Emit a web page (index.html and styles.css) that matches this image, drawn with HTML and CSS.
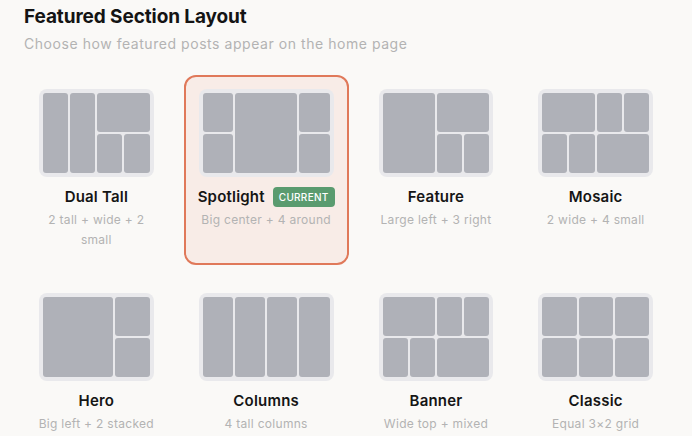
FILE: index.html
```html
<!DOCTYPE html>
<html>
<head>
<meta charset="utf-8">
<link rel="stylesheet" href="styles.css">
</head>
<body>
<div class="page">
  <header class="header">
    <h1 class="title">Featured Section Layout</h1>
    <p class="subtitle">Choose how featured posts appear on the home page</p>
  </header>
  <div class="grid">
    <div class="card">
      <div class="thumb t-dual">
        <i class="c c1"></i><i class="c c2"></i><i class="c c3"></i><i class="c"></i><i class="c"></i>
      </div>
      <div class="name">Dual Tall</div>
      <div class="desc">2 tall + wide + 2 small</div>
    </div>
    <div class="card selected">
      <div class="thumb t-spot">
        <i class="c"></i><i class="c c-mid"></i><i class="c"></i><i class="c"></i><i class="c"></i>
      </div>
      <div class="name">Spotlight <span class="badge">CURRENT</span></div>
      <div class="desc">Big center + 4 around</div>
    </div>
    <div class="card">
      <div class="thumb t-feat">
        <i class="c c-big"></i><i class="c c-wide"></i><i class="c"></i><i class="c"></i>
      </div>
      <div class="name">Feature</div>
      <div class="desc">Large left + 3 right</div>
    </div>
    <div class="card">
      <div class="thumb t-mosaic">
        <i class="c c-wide"></i><i class="c"></i><i class="c"></i><i class="c"></i><i class="c"></i><i class="c c-wide"></i>
      </div>
      <div class="name">Mosaic</div>
      <div class="desc">2 wide + 4 small</div>
    </div>
    <div class="card">
      <div class="thumb t-hero">
        <i class="c c-tall"></i><i class="c"></i><i class="c"></i>
      </div>
      <div class="name">Hero</div>
      <div class="desc">Big left + 2 stacked</div>
    </div>
    <div class="card">
      <div class="thumb t-cols">
        <i class="c"></i><i class="c"></i><i class="c"></i><i class="c"></i>
      </div>
      <div class="name">Columns</div>
      <div class="desc">4 tall columns</div>
    </div>
    <div class="card">
      <div class="thumb t-mosaic">
        <i class="c c-wide"></i><i class="c"></i><i class="c"></i><i class="c"></i><i class="c"></i><i class="c c-wide"></i>
      </div>
      <div class="name">Banner</div>
      <div class="desc">Wide top + mixed</div>
    </div>
    <div class="card">
      <div class="thumb t-classic">
        <i class="c"></i><i class="c"></i><i class="c"></i><i class="c"></i><i class="c"></i><i class="c"></i>
      </div>
      <div class="name">Classic</div>
      <div class="desc">Equal 3×2 grid</div>
    </div>
  </div>
</div>
</body>
</html>
```

FILE: styles.css
```css
* { box-sizing: border-box; }
html, body { margin: 0; padding: 0; }
body {
  background: #faf9f7;
  font-family: "Inter", "Liberation Sans", sans-serif;
  color: #1b1b1b;
  overflow: hidden;
}
.page { padding: 5px 24px 0; }
.header { margin-bottom: 21px; }
.title {
  margin: 0;
  font-size: 19px;
  line-height: 24px;
  font-weight: 700;
  color: #141414;
  letter-spacing: -0.1px;
}
.subtitle {
  margin: 5px 0 0;
  font-size: 14px;
  line-height: 20px;
  color: #b3b3b3;
  letter-spacing: 0.55px;
}
.grid {
  display: grid;
  grid-template-columns: 1fr 165px 1fr 1fr;
  column-gap: 15px;
  row-gap: 14px;
}
.card {
  border: 2px solid transparent;
  border-radius: 12px;
  padding: 12px 13px 13px;
  text-align: center;
}
.card.selected {
  border-color: #e0795a;
  background: #f8ece7;
}
.thumb {
  height: 88px;
  padding: 4px;
  background: #e9e9ec;
  border-radius: 8px;
  display: grid;
  gap: 2px;
}
.c {
  display: block;
  background: #afb1b8;
  border-radius: 3px;
}
.t-dual { grid-template-columns: repeat(4, 1fr); grid-template-rows: 1fr 1fr; }
.t-dual .c1, .t-dual .c2 { grid-row: span 2; }
.t-dual .c3 { grid-column: span 2; }
.t-spot { grid-template-columns: 1fr 2fr 1fr; grid-template-rows: 1fr 1fr; }
.t-spot .c-mid { grid-column: 2; grid-row: 1 / span 2; }
.t-feat { grid-template-columns: repeat(4, 1fr); grid-template-rows: 1fr 1fr; }
.t-feat .c-big { grid-column: span 2; grid-row: span 2; }
.t-feat .c-wide { grid-column: span 2; }
.t-mosaic { grid-template-columns: repeat(4, 1fr); grid-template-rows: 1fr 1fr; }
.t-mosaic .c-wide { grid-column: span 2; }
.t-hero { grid-template-columns: 2fr 1fr; grid-template-rows: 1fr 1fr; }
.t-hero .c-tall { grid-row: span 2; }
.t-cols { grid-template-columns: repeat(4, 1fr); }
.t-classic { grid-template-columns: repeat(3, 1fr); grid-template-rows: 1fr 1fr; }
.name {
  margin-top: 10px;
  font-size: 15px;
  line-height: 20px;
  font-weight: 600;
  color: #151515;
  letter-spacing: 0.2px;
  display: flex;
  justify-content: center;
  align-items: center;
  gap: 8px;
}
.badge {
  display: inline-block;
  background: #5a9b6f;
  color: #ffffff;
  font-size: 10px;
  line-height: 20px;
  font-weight: 500;
  letter-spacing: 0.3px;
  padding: 0 6px;
  border-radius: 4px;
}
.desc {
  margin: 3px -4px 0;
  font-size: 12px;
  line-height: 20px;
  color: #b3b3b3;
  letter-spacing: 0.3px;
}
```
